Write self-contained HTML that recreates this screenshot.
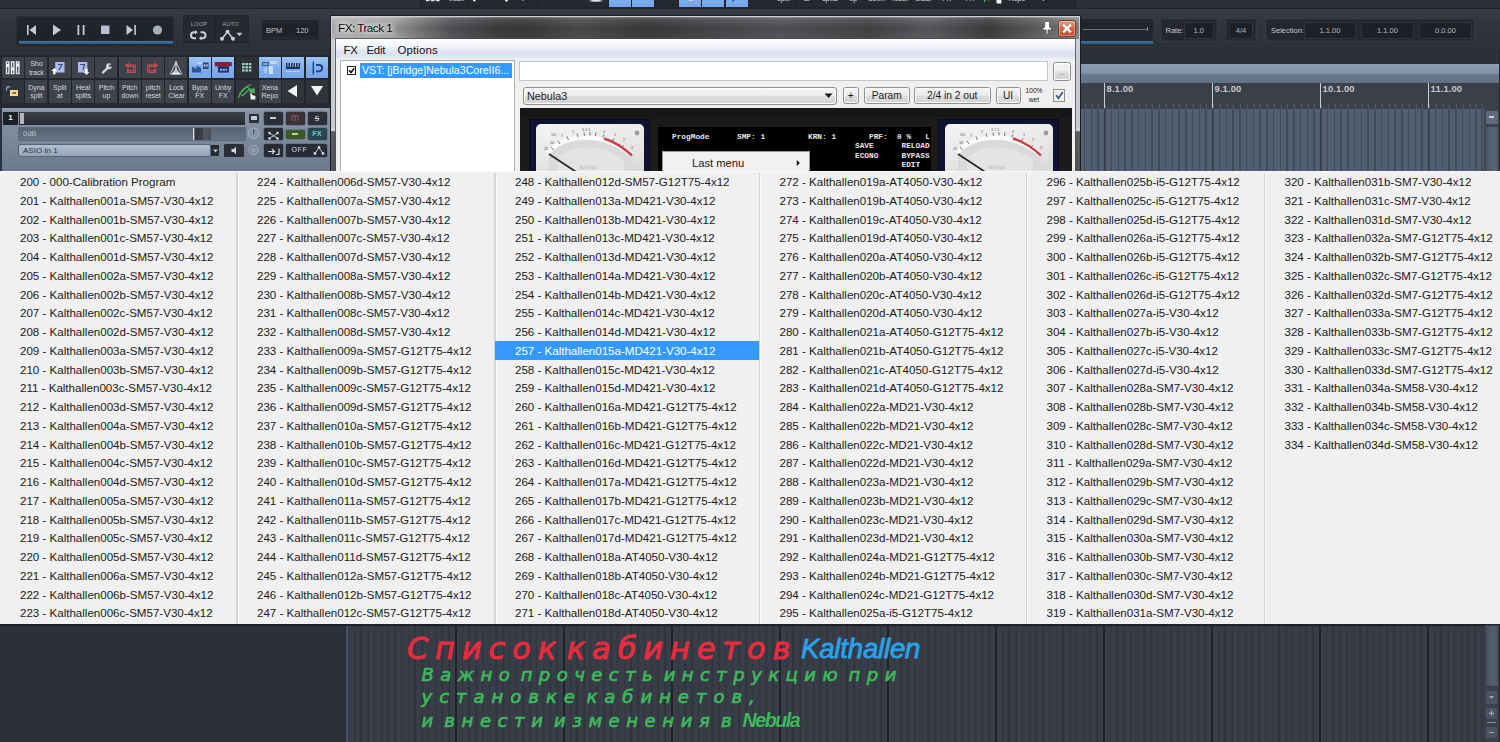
<!DOCTYPE html>
<html><head><meta charset="utf-8"><title>FX: Track 1</title>
<style>
html,body{margin:0;padding:0;}
body{width:1500px;height:742px;overflow:hidden;background:#2d3139;position:relative;font-family:"Liberation Sans","DejaVu Sans",sans-serif;}
.a{position:absolute;}
.menu{left:0;top:171px;width:1500px;height:453px;background:#f0f0f0;border-top:1px solid #fafafa;box-sizing:border-box;}
.col{position:absolute;top:1px;}
.col div{height:18.75px;line-height:18.75px;font-size:11.6px;color:#1a1a1a;padding-left:20px;white-space:nowrap;letter-spacing:-0.02px;}
.col div.sel{background:#3399ff;color:#fff;position:relative;top:-.5px;height:18.500px;line-height:19.750px;margin-bottom:.250px;}
.dv{position:absolute;top:1px;height:451px;width:1.700px;margin-left:-1px;background:#d5d5d5;border-right:1px solid #fbfbfb;}
</style></head><body>
<style>.tb{position:absolute;width:22px;height:21px;background:#3e424a;box-shadow:0 0 0 1px #22252b;color:#d4d7de;font-size:7.100px;line-height:8.500px;text-align:center;overflow:hidden;}.tb.r2{height:22.5px}.tb.bl{background:linear-gradient(#9dc4f5,#7eaeec 55%,#76a6e6);}.tb.r2 span{padding-top:3.900px}.tb span{display:block;padding-top:3.300px;letter-spacing:-0.1px}.tb svg{position:absolute;left:0;top:0}</style><div class="a" style="left:0;top:0;width:1500px;height:8px;background:#2b2f38"></div><div class="a" style="left:0;top:8px;width:1500px;height:1px;background:#20232a"></div><div class="a" style="left:0;top:9px;width:1500px;height:46px;background:linear-gradient(#373b44,#30343c 40%,#2b2f37)"></div><div class="a" style="left:17px;top:17px;width:156px;height:29px;background:linear-gradient(#23262d,#1f2228 70%,#2a2826);border-radius:2px;box-shadow:0 0 0 1px #2a2d35"></div><div class="a" style="left:19px;top:41px;width:154px;height:3px;background:linear-gradient(#4379a8,#2c5680)"></div><div class="a" style="left:44px;top:18px;width:1px;height:23px;background:#1d2026"></div><div class="a" style="left:68px;top:18px;width:1px;height:23px;background:#1d2026"></div><div class="a" style="left:92px;top:18px;width:1px;height:23px;background:#1d2026"></div><div class="a" style="left:117px;top:18px;width:1px;height:23px;background:#1d2026"></div><div class="a" style="left:143px;top:18px;width:1px;height:23px;background:#1d2026"></div><svg class="a" style="left:17px;top:17px" width="156" height="29" viewBox="17 17 156 29"><g fill="#c6cad3"><rect x="27" y="25" width="1.6" height="10"/><path d="M36 25v10l-6.5-5z"/><path d="M53 24.5v11l8-5.5z"/><rect x="77.5" y="25" width="1.8" height="10"/><rect x="82.7" y="25" width="1.8" height="10"/><rect x="101" y="25.5" width="8.5" height="8.5" fill="#b9bdd2"/><path d="M126.5 25v10l6.5-5z"/><rect x="134.3" y="25" width="1.6" height="10"/><circle cx="157.5" cy="30" r="4.6" fill="#a3b4b2"/></g></svg><div class="a" style="left:183.500px;top:15.500px;width:30px;height:26px;background:#252930;box-shadow:0 0 0 1px #22252b"></div><div class="a" style="left:215.500px;top:15.500px;width:32px;height:26px;background:#252930;box-shadow:0 0 0 1px #22252b"></div><div class="a" style="left:184px;top:20.800px;width:30px;text-align:center;font-size:5.600px;color:#a3a7b1;letter-spacing:.3px">LOOP</div><div class="a" style="left:215.500px;top:20.800px;width:30px;text-align:center;font-size:5.600px;color:#a3a7b1;letter-spacing:.3px">AUTO</div><svg class="a" style="left:183px;top:16px" width="64" height="28" viewBox="183 15.300 64 28" fill="none" stroke="#c9cdd5" stroke-width="2"><path d="M196.5 31.5h-2.5a3 3 0 0 0 0 6h2"/><path d="M200 37.5h2.5a3 3 0 0 0 0-6h-2"/><path d="M195 29.3l2.6 2.2-2.6 2.2z" fill="#c3c7d0" stroke="none"/><path d="M201.5 35.3l-2.6 2.2 2.6 2.2z" fill="#c3c7d0" stroke="none"/><path d="M222 38l5.5-7 5.5 7" stroke-width="1.4"/><circle cx="227.5" cy="31" r="2" fill="#c9cdd5" stroke="none"/><circle cx="222" cy="38" r="2" fill="#c9cdd5" stroke="none"/><circle cx="233" cy="38" r="2" fill="#c9cdd5" stroke="none"/><path d="M236.5 32h6l-3 3.6z" fill="#c3c7d0" stroke="none"/></svg><div class="a" style="left:263px;top:21px;width:55px;height:18px;background:linear-gradient(#2a2d35 0,#1f2228 18%,#1f2228 82%,#2a2d35 100%);box-shadow:0 0 0 1px #23262c;font-size:7.500px;line-height:20px;color:#c0c4cc"><span class="a" style="left:3px">BPM</span><span class="a" style="left:33px">120</span></div><div class="a" style="left:0;top:55px;width:331px;height:50px;background:#23262c"></div><div class="tb" style="left:2.0px;top:57px"><svg width="22" height="21" viewBox="0 0 22 21"><g fill="#e3e6eb"><rect x="3.800" y="4.200" width="3.800" height="13"/><rect x="8.800" y="4.200" width="3.800" height="13"/><rect x="13.800" y="4.200" width="3.800" height="13"/></g><g fill="#33363d"><rect x="5.200" y="5.500" width="1" height="10.500"/><rect x="10.200" y="5.500" width="1" height="10.500"/><rect x="15.200" y="5.500" width="1" height="10.500"/></g><g fill="#f4f5f8"><rect x="4.300" y="7" width="2.800" height="3"/><rect x="9.300" y="10.500" width="2.800" height="3"/><rect x="14.300" y="6.500" width="2.800" height="3"/></g></svg></div><div class="tb" style="left:25.35px;top:57px"><span>Sho<br>track</span></div><div class="tb" style="left:48.7px;top:57px"><svg width="22" height="21" viewBox="0 0 22 21"><rect x="6.200" y="5" width="9.300" height="10.500" fill="#a9bbec"/><path d="M9 7.500h4l-3 5.500" stroke="#3e4a7a" fill="none" stroke-width="1.200"/><path d="M5.300 11l2.800 3h-1.600v3.300h-2.400v-3.300h-1.600z" fill="#fff"/></svg></div><div class="tb" style="left:72.05px;top:57px"><svg width="22" height="21" viewBox="0 0 22 21"><rect x="6" y="5" width="9.300" height="10.500" fill="#a9bbec"/><path d="M8 7.500h4.500l-1.500 5.500" stroke="#3e4a7a" fill="none" stroke-width="1.200"/><path d="M14.500 18l2.800-3h-1.600v-3.300h-2.400v3.300h-1.600z" fill="#fff"/></svg></div><div class="tb" style="left:95.4px;top:57px"><svg width="22" height="21" viewBox="0 0 22 21"><path d="M8 15.500l5-5" stroke="#d4d7de" stroke-width="2.400" stroke-linecap="round"/><path d="M16.300 7.200a3 3 0 1 0 .7 2.300l-2.300.5-1.200-1.400z" fill="#d4d7de"/></svg></div><div class="tb" style="left:118.75px;top:57px"><svg width="22" height="21" viewBox="0 0 22 21"><path d="M9.500 8.600h6v6h-6.500v-2.500" fill="none" stroke="#d9606a" stroke-width="2.200"/><path d="M9.500 8.600h6v6h-6.500v-2.500" fill="none" stroke="#a52a3a" stroke-width=".9"/><path d="M5.800 8.600l4-3v6z" fill="#d04a56"/></svg></div><div class="tb" style="left:142.1px;top:57px"><svg width="22" height="21" viewBox="0 0 22 21"><path d="M12.500 8.600h-6v6h6.500v-2.500" fill="none" stroke="#d9606a" stroke-width="2.200"/><path d="M12.500 8.600h-6v6h6.500v-2.500" fill="none" stroke="#a52a3a" stroke-width=".9"/><path d="M16.200 8.600l-4-3v6z" fill="#d04a56"/></svg></div><div class="tb" style="left:165.45px;top:57px"><svg width="22" height="21" viewBox="0 0 22 21"><path d="M11 5l5.500 12h-11z" fill="none" stroke="#aab0bd" stroke-width="1.200"/><path d="M6.500 17.500l4.500-6 4.500 6z" fill="#e3e7ee"/><path d="M11 4.500v8" stroke="#f4f6fa" stroke-width="1"/><circle cx="11" cy="14.800" r=".8" fill="#4a5680"/></svg></div><div class="tb bl" style="left:188.8px;top:57px"><svg width="22" height="21" viewBox="0 0 22 21"><path d="M3 9.500l4.500 2.500v-3.500l4.500 2.500v4.500h-9z" fill="#2a5690"/><rect x="14" y="5.500" width="5.500" height="6.500" fill="#233f74"/><path d="M15.300 10.300v-3l1.400 1.800 1.400-1.800v3" stroke="#dbe7fa" stroke-width=".8" fill="none"/><path d="M8.500 6h4.500" stroke="#dce9fb" stroke-width="1.300"/></svg></div><div class="tb bl" style="left:212.15px;top:57px"><svg width="22" height="21" viewBox="0 0 22 21"><path d="M2.800 5h17v4.200h-2.800v1.500h-11.400v-1.500h-2.800z" fill="#7d1f3f"/><rect x="6" y="10" width="11" height="5.600" fill="#1f3770"/><path d="M8 12.800h7" stroke="#e8eefc" stroke-width="1.300" stroke-dasharray="2 .8"/></svg></div><div class="tb" style="background:#2c3037;left:235.5px;top:57px"><svg width="22" height="21" viewBox="0 0 22 21"><g fill="#9ed3c0"><rect x="6" y="6" width="2.600" height="2.200"/><rect x="9.400" y="6" width="2.600" height="2.200"/><rect x="12.800" y="6" width="2.600" height="2.200"/><rect x="6" y="9.200" width="2.600" height="2.200"/><rect x="9.400" y="9.200" width="2.600" height="2.200"/><rect x="12.800" y="9.200" width="2.600" height="2.200"/><rect x="6" y="12.400" width="2.600" height="2.200"/><rect x="9.400" y="12.400" width="2.600" height="2.200"/><rect x="12.800" y="12.400" width="2.600" height="2.200"/></g></svg></div><div class="tb bl" style="left:258.85px;top:57px"><svg width="22" height="21" viewBox="0 0 22 21"><rect x="3" y="5" width="7" height="4" fill="#2c5c9a"/><path d="M4 7h5" stroke="#e8f0fc" stroke-width="1"/><rect x="11" y="4" width="7" height="3" fill="#bcd6f8"/><rect x="5" y="11" width="3" height="5" fill="#a9c9f5"/><rect x="10" y="9" width="4" height="8" fill="#c8ddfa"/></svg></div><div class="tb bl" style="left:282.2px;top:57px"><svg width="22" height="21" viewBox="0 0 22 21"><rect x="4" y="6" width="14" height="6" fill="#1c2f58"/><g fill="#9fc1f0"><rect x="5.500" y="6" width="1" height="4"/><rect x="8" y="6" width="1" height="4"/><rect x="10.500" y="6" width="1" height="4"/><rect x="13" y="6" width="1" height="4"/><rect x="15.500" y="6" width="1" height="4"/></g><path d="M4 14.500h14" stroke="#e8f0fc" stroke-width="1.200" stroke-dasharray="1.200 1"/></svg></div><div class="tb bl" style="left:305.55px;top:57px"><svg width="22" height="21" viewBox="0 0 22 21"><path d="M7.300 4.500v13" stroke="#24488a" stroke-width="1.500"/><path d="M10 8h3a3.200 3.200 0 0 1 0 6.400h-3" fill="none" stroke="#1f3f80" stroke-width="1.800"/></svg></div><div class="tb r2" style="left:2.0px;top:80px;background:#30333a"><svg width="22" height="22" viewBox="0 0 22 22"><path d="M4.500 10.500v-2a2 2 0 0 1 3.500-1.200" fill="none" stroke="#a9acb4" stroke-width="1.200"/><rect x="8" y="10" width="8" height="6" fill="#f0d7a0"/><rect x="10.500" y="12" width="3.500" height="2" fill="#8a6a2a"/></svg></div><div class="tb r2" style="left:25.35px;top:80px"><span>Dyna<br>split</span></div><div class="tb r2" style="left:48.7px;top:80px"><span>Split<br>at</span></div><div class="tb r2" style="left:72.05px;top:80px"><span>Heal<br>splits</span></div><div class="tb r2" style="left:95.4px;top:80px"><span>Pitch<br>up</span></div><div class="tb r2" style="left:118.75px;top:80px"><span>Pitch<br>down</span></div><div class="tb r2" style="left:142.1px;top:80px"><span>pitch<br>reset</span></div><div class="tb r2" style="left:165.45px;top:80px"><span>Lock<br>Clear</span></div><div class="tb r2" style="left:188.8px;top:80px"><span>Bypa<br>FX</span></div><div class="tb r2" style="left:212.15px;top:80px"><span>Unby<br>FX</span></div><div class="tb r2" style="left:235.5px;top:80px;background:#30333a"><svg width="22" height="22" viewBox="0 0 22 22"><path d="M2.500 18c1-6 5-11 13-13.500" fill="none" stroke="#4fae62" stroke-width="1.300"/><path d="M4 13.500l7-7 2.500 2.500-7 7z" fill="none" stroke="#4fae62" stroke-width="1.200"/><path d="M6.500 16l7-7" stroke="#4fae62" stroke-width="1"/><rect x="13.500" y="8.500" width="5.500" height="4.500" fill="#4aa860"/><path d="M14.200 15c0-2.200 2-2.200 2 0l3.200 1v3.500h-4.700z" fill="#f2f4f7"/></svg></div><div class="tb r2" style="left:258.85px;top:80px"><span>Xena<br>Repo</span></div><div class="tb r2" style="left:282.2px;top:80px;background:#30333a"><svg width="22" height="22" viewBox="0 0 22 22"><path d="M15 5v12l-9.500-6z" fill="#f2f3f6"/></svg></div><div class="tb r2" style="left:305.55px;top:80px;background:#30333a"><svg width="22" height="22" viewBox="0 0 22 22"><path d="M5 6h12l-6 9.500z" fill="#f2f3f6"/></svg></div>
<div class="a" style="left:420px;top:0;width:656px;height:7.500px;background:#202329"></div><div class="tb" style="left:422.0px;top:-16.500px;height:23px;background:#262930"><svg width="22" height="22" viewBox="0 0 22 22"><g fill="#e3e6eb"><rect x="3.800" y="4.200" width="3.800" height="13"/><rect x="8.800" y="4.200" width="3.800" height="13"/><rect x="13.800" y="4.200" width="3.800" height="13"/></g><g fill="#33363d"><rect x="5.200" y="5.500" width="1" height="10.500"/><rect x="10.200" y="5.500" width="1" height="10.500"/><rect x="15.200" y="5.500" width="1" height="10.500"/></g><g fill="#f4f5f8"><rect x="4.300" y="7" width="2.800" height="3"/><rect x="9.300" y="10.500" width="2.800" height="3"/><rect x="14.300" y="6.500" width="2.800" height="3"/></g></svg></div><div class="tb" style="left:445.35px;top:-16.500px;height:23px;background:#262930"><span>Sho<br>track</span></div><div class="tb" style="left:468.7px;top:-16.500px;height:23px;background:#262930"><svg width="22" height="22" viewBox="0 0 22 22"><rect x="6.200" y="5" width="9.300" height="10.500" fill="#a9bbec"/><path d="M9 7.500h4l-3 5.500" stroke="#3e4a7a" fill="none" stroke-width="1.200"/><path d="M5.300 11l2.800 3h-1.600v3.300h-2.400v-3.300h-1.600z" fill="#fff"/></svg></div><div class="tb" style="left:492.05px;top:-16.500px;height:23px;background:#262930"><svg width="22" height="22" viewBox="0 0 22 22"><rect x="6" y="5" width="9.300" height="10.500" fill="#a9bbec"/><path d="M8 7.500h4.500l-1.500 5.500" stroke="#3e4a7a" fill="none" stroke-width="1.200"/><path d="M14.500 18l2.800-3h-1.600v-3.300h-2.400v3.300h-1.600z" fill="#fff"/></svg></div><div class="tb" style="left:515.4px;top:-16.500px;height:23px;background:#262930"><svg width="22" height="22" viewBox="0 0 22 22"><path d="M8 15.500l5-5" stroke="#d4d7de" stroke-width="2.400" stroke-linecap="round"/><path d="M16.300 7.200a3 3 0 1 0 .7 2.300l-2.300.5-1.200-1.400z" fill="#d4d7de"/></svg></div><div class="tb" style="left:538.75px;top:-16.500px;height:23px;background:#262930"><svg width="22" height="22" viewBox="0 0 22 22"><path d="M9.500 8.600h6v6h-6.500v-2.500" fill="none" stroke="#d9606a" stroke-width="2.200"/><path d="M9.500 8.600h6v6h-6.500v-2.500" fill="none" stroke="#a52a3a" stroke-width=".9"/><path d="M5.800 8.600l4-3v6z" fill="#d04a56"/></svg></div><div class="tb" style="left:562.1px;top:-16.500px;height:23px;background:#262930"><svg width="22" height="22" viewBox="0 0 22 22"><path d="M12.500 8.600h-6v6h6.500v-2.500" fill="none" stroke="#d9606a" stroke-width="2.200"/><path d="M12.500 8.600h-6v6h6.500v-2.500" fill="none" stroke="#a52a3a" stroke-width=".9"/><path d="M16.200 8.600l-4-3v6z" fill="#d04a56"/></svg></div><div class="tb" style="left:585.45px;top:-16.500px;height:23px;background:#262930"><svg width="22" height="22" viewBox="0 0 22 22"><path d="M11 5l5.500 12h-11z" fill="none" stroke="#aab0bd" stroke-width="1.200"/><path d="M6.500 17.500l4.500-6 4.500 6z" fill="#e3e7ee"/><path d="M11 4.500v8" stroke="#f4f6fa" stroke-width="1"/><circle cx="11" cy="14.800" r=".8" fill="#4a5680"/></svg></div><div class="tb bl" style="left:608.8px;top:-16.500px;height:23px"><svg width="22" height="22" viewBox="0 0 22 22"><path d="M3 9.500l4.500 2.500v-3.500l4.500 2.500v4.500h-9z" fill="#2a5690"/><rect x="14" y="5.500" width="5.500" height="6.500" fill="#233f74"/><path d="M15.300 10.300v-3l1.400 1.800 1.400-1.800v3" stroke="#dbe7fa" stroke-width=".8" fill="none"/><path d="M8.500 6h4.500" stroke="#dce9fb" stroke-width="1.300"/></svg></div><div class="tb bl" style="left:632.15px;top:-16.500px;height:23px"><svg width="22" height="22" viewBox="0 0 22 22"><path d="M2.800 5h17v4.200h-2.800v1.500h-11.400v-1.500h-2.800z" fill="#7d1f3f"/><rect x="6" y="10" width="11" height="5.600" fill="#1f3770"/><path d="M8 12.800h7" stroke="#e8eefc" stroke-width="1.300" stroke-dasharray="2 .8"/></svg></div><div class="tb" style="left:655.5px;top:-16.500px;height:23px;background:#262930"><svg width="22" height="22" viewBox="0 0 22 22"><g fill="#9ed3c0"><rect x="6" y="6" width="2.600" height="2.200"/><rect x="9.400" y="6" width="2.600" height="2.200"/><rect x="12.800" y="6" width="2.600" height="2.200"/><rect x="6" y="9.200" width="2.600" height="2.200"/><rect x="9.400" y="9.200" width="2.600" height="2.200"/><rect x="12.800" y="9.200" width="2.600" height="2.200"/><rect x="6" y="12.400" width="2.600" height="2.200"/><rect x="9.400" y="12.400" width="2.600" height="2.200"/><rect x="12.800" y="12.400" width="2.600" height="2.200"/></g></svg></div><div class="tb bl" style="left:678.85px;top:-16.500px;height:23px"><svg width="22" height="22" viewBox="0 0 22 22"><rect x="3" y="5" width="7" height="4" fill="#2c5c9a"/><path d="M4 7h5" stroke="#e8f0fc" stroke-width="1"/><rect x="11" y="4" width="7" height="3" fill="#bcd6f8"/><rect x="5" y="11" width="3" height="5" fill="#a9c9f5"/><rect x="10" y="9" width="4" height="8" fill="#c8ddfa"/></svg></div><div class="tb bl" style="left:702.2px;top:-16.500px;height:23px"><svg width="22" height="22" viewBox="0 0 22 22"><rect x="4" y="6" width="14" height="6" fill="#1c2f58"/><g fill="#9fc1f0"><rect x="5.500" y="6" width="1" height="4"/><rect x="8" y="6" width="1" height="4"/><rect x="10.500" y="6" width="1" height="4"/><rect x="13" y="6" width="1" height="4"/><rect x="15.500" y="6" width="1" height="4"/></g><path d="M4 14.500h14" stroke="#e8f0fc" stroke-width="1.200" stroke-dasharray="1.200 1"/></svg></div><div class="tb bl" style="left:725.55px;top:-16.500px;height:23px"><svg width="22" height="22" viewBox="0 0 22 22"><path d="M7.300 4.500v13" stroke="#24488a" stroke-width="1.500"/><path d="M10 8h3a3.200 3.200 0 0 1 0 6.400h-3" fill="none" stroke="#1f3f80" stroke-width="1.800"/></svg></div><div class="tb" style="left:748.9px;top:-16.500px;height:23px;background:#262930"><svg width="22" height="22" viewBox="0 0 22 22"><path d="M4.500 10.500v-2a2 2 0 0 1 3.500-1.200" fill="none" stroke="#a9acb4" stroke-width="1.200"/><rect x="8" y="10" width="8" height="6" fill="#f0d7a0"/><rect x="10.500" y="12" width="3.500" height="2" fill="#8a6a2a"/></svg></div><div class="tb" style="left:772.25px;top:-16.500px;height:23px;background:#262930"><span>Dyna<br>split</span></div><div class="tb" style="left:795.6px;top:-16.500px;height:23px;background:#262930"><span>Split<br>at</span></div><div class="tb" style="left:818.95px;top:-16.500px;height:23px;background:#262930"><span>Heal<br>splits</span></div><div class="tb" style="left:842.3px;top:-16.500px;height:23px;background:#262930"><span>Pitch<br>up</span></div><div class="tb" style="left:865.65px;top:-16.500px;height:23px;background:#262930"><span>Pitch<br>down</span></div><div class="tb" style="left:889.0px;top:-16.500px;height:23px;background:#262930"><span>pitch<br>reset</span></div><div class="tb" style="left:912.35px;top:-16.500px;height:23px;background:#262930"><span>Lock<br>Clear</span></div><div class="tb" style="left:935.7px;top:-16.500px;height:23px;background:#262930"><span>Bypa<br>FX</span></div><div class="tb" style="left:959.05px;top:-16.500px;height:23px;background:#262930"><span>Unby<br>FX</span></div><div class="tb" style="left:982.4px;top:-16.500px;height:23px;background:#262930"><svg width="22" height="22" viewBox="0 0 22 22"><path d="M2.500 18c1-6 5-11 13-13.500" fill="none" stroke="#4fae62" stroke-width="1.300"/><path d="M4 13.500l7-7 2.500 2.500-7 7z" fill="none" stroke="#4fae62" stroke-width="1.200"/><path d="M6.500 16l7-7" stroke="#4fae62" stroke-width="1"/><rect x="13.500" y="8.500" width="5.500" height="4.500" fill="#4aa860"/><path d="M14.200 15c0-2.200 2-2.200 2 0l3.200 1v3.500h-4.700z" fill="#f2f4f7"/></svg></div><div class="tb" style="left:1005.75px;top:-16.500px;height:23px;background:#262930"><span>Xena<br>Repo</span></div><div class="tb" style="left:1029.1px;top:-16.500px;height:23px;background:#262930"><svg width="22" height="22" viewBox="0 0 22 22"><path d="M15 5v12l-9.500-6z" fill="#f2f3f6"/></svg></div><div class="tb" style="left:1052.45px;top:-16.500px;height:23px;background:#262930"><svg width="22" height="22" viewBox="0 0 22 22"><path d="M5 6h12l-6 9.500z" fill="#f2f3f6"/></svg></div>
<div class="a" style="left:0;top:103px;width:331px;height:5px;background:#262a31"></div><div class="a" style="left:0;top:107.500px;width:330.500px;height:64px;background:linear-gradient(#91a0b2 0,#8593a5 5%,#7a8899 50%,#6b798a 100%)"></div><div class="a" style="left:0;top:107.500px;width:2px;height:64px;background:#2a3040"></div><div class="a" style="left:3px;top:112px;width:15px;height:12.500px;background:#1d2027;color:#f4f4f4;font-size:8px;line-height:12.500px;text-align:center;font-weight:bold">1</div><div class="a" style="left:19px;top:112px;width:225.500px;height:12.500px;background:linear-gradient(#3a3f49,#262a32)"></div><div class="a" style="left:20px;top:112.500px;width:4px;height:11.500px;background:#aeb6c2"></div><div class="a" style="left:19px;top:128px;width:225.500px;height:11.500px;background:linear-gradient(#566373,#667383);box-shadow:0 0 0 1px #5d6a7b;font-size:7.500px;line-height:12px;color:#b4bfcc"><span style="padding-left:4px">0dB</span></div><div class="a" style="left:193px;top:127.500px;width:17.500px;height:12.500px;background:linear-gradient(90deg,#d8dde6 0,#d8dde6 6%,#30343c 10%,#3d424b 55%,#555b66 60%,#484d57 100%)"></div><div class="a" style="left:19px;top:144.500px;width:191px;height:11px;background:linear-gradient(#b1bfcf,#94a4b8);border-radius:2px;box-shadow:0 0 0 1px #566578;font-size:8px;line-height:11.500px;color:#2a3442"><span style="padding-left:4px">ASIO In 1</span></div><div class="a" style="left:210.500px;top:144.500px;width:8.500px;height:11px;background:#262a31"></div><svg class="a" style="left:210.500px;top:144.500px" width="9" height="11"><path d="M2 4.500h5l-2.500 3z" fill="#c9ced8"/></svg><div class="a" style="left:224px;top:144px;width:19.500px;height:12.500px;background:#2a2e35;border-radius:1.500px"></div><svg class="a" style="left:224px;top:144px" width="20" height="13"><path d="M7.500 5h2l2.500-2.200v7.400l-2.500-2.200h-2z" fill="#cfd3db"/></svg><div class="a" style="left:248.500px;top:114px;width:10px;height:8.500px;background:#2b3038;border-radius:1px"></div><div class="a" style="left:251px;top:116px;width:5.500px;height:4px;background:#c5cbd6"></div><svg class="a" style="left:246px;top:126px" width="16" height="32" fill="none"><circle cx="7.600" cy="7.300" r="5.300" fill="#8494a9" stroke="#a6b4c6" stroke-width="1"/><path d="M7.600 3.500v4.500" stroke="#46546a" stroke-width="1.200"/><circle cx="7.600" cy="24" r="4.600" fill="#7c8ca1" stroke="#9fadc0" stroke-width="1"/><circle cx="7.600" cy="24" r="1.500" stroke="#a9b7c9" stroke-width=".8"/></svg><div class="a" style="left:263.5px;top:112px;width:19px;height:12.500px;background:#2a2e36;border-radius:1.500px;box-shadow:0 0 0 .5px #566276"><div class="a" style="left:6.500px;top:4.500px;width:6px;height:2.500px;background:#c9ced8"></div></div><div class="a" style="left:285.5px;top:112px;width:19px;height:12.500px;background:#3b3137;border-radius:1.500px;box-shadow:0 0 0 .5px #566276"><div class="a" style="left:0;top:0;width:19px;text-align:center;font-size:10px;line-height:11px;color:#8e5f66">m</div></div><div class="a" style="left:307.5px;top:112px;width:19px;height:12.500px;background:#2a2e36;border-radius:1.500px;box-shadow:0 0 0 .5px #566276"><div class="a" style="left:0;top:0;width:19px;text-align:center;font-size:9px;line-height:12.500px;color:#d5d9e1;text-decoration:line-through">s</div></div><div class="a" style="left:263.5px;top:127.5px;width:19px;height:12.500px;background:#272b33;border-radius:1.500px;box-shadow:0 0 0 .5px #566276"><svg width="19" height="13" fill="#d5d9e1"><circle cx="5.500" cy="4" r="1.300"/><circle cx="13.500" cy="4" r="1.300"/><circle cx="5.500" cy="9.500" r="1.300"/><circle cx="13.500" cy="9.500" r="1.300"/><path d="M6 4.500l7 4.500M13 4.500l-7 4.500" stroke="#d5d9e1" stroke-width=".9"/></svg></div><div class="a" style="left:285.500px;top:129.500px;width:19px;height:9px;background:#3c5a25;border-radius:1.500px;box-shadow:0 0 0 .5px #566276"><div class="a" style="left:6.500px;top:3.500px;width:6px;height:2px;background:#b6dc86"></div></div><div class="a" style="left:307.5px;top:127.5px;width:19px;height:12.500px;background:#274752;border-radius:1.500px;box-shadow:0 0 0 .5px #566276"><div class="a" style="left:0;top:0;width:19px;text-align:center;font-size:7.500px;line-height:12.500px;color:#72c4c9;font-weight:bold">FX</div></div><div class="a" style="left:263.5px;top:144px;width:19px;height:12.500px;background:#272b33;border-radius:1.500px;box-shadow:0 0 0 .5px #566276"><svg width="19" height="13" fill="none" stroke="#d5d9e1" stroke-width="1.200"><path d="M4 6.500h6M8 4l2.500 2.500-2.500 2.500"/><path d="M12 9.500h3v-6"/></svg></div><div class="a" style="left:285.5px;top:144px;width:41px;height:12.500px;background:#272b33;border-radius:1.500px;box-shadow:0 0 0 .5px #566276"><div class="a" style="left:6px;top:0;font-size:7px;line-height:12.500px;color:#d5d9e1;letter-spacing:.6px">OFF</div><svg class="a" style="left:26px;top:0" width="14" height="13" fill="#d5d9e1"><circle cx="7" cy="3.500" r="1.400"/><circle cx="3" cy="9.500" r="1.400"/><circle cx="11" cy="9.500" r="1.400"/><path d="M3 9.500l4-6 4 6" stroke="#d5d9e1" fill="none" stroke-width=".9"/></svg></div>
<style>.dbx{position:absolute;top:19.500px;height:20.500px;background:#24272e;box-shadow:0 0 0 1px #2a2d34,0 0 0 2px #353942;font-size:7.500px;line-height:22px;color:#c2c6cf;white-space:nowrap}.dbx i{position:absolute;top:3.500px;height:15px;background:#1d2026;box-shadow:0 0 0 1px #30333b;font-style:normal;line-height:16px;text-align:center;color:#b4b8c1}.rl{position:absolute;top:84.200px;font-size:9.400px;line-height:10px;color:#c6cad2;font-weight:bold;letter-spacing:.1px}</style><div class="a" style="left:1080px;top:19px;width:73px;height:22px;background:#23262d"></div><div class="a" style="left:1083px;top:29px;width:65px;height:1px;background:#70747c"></div><div class="a" style="left:1147px;top:27px;width:1px;height:4px;background:#8a8e96"></div><div class="a" style="left:1080px;top:40.500px;width:73px;height:3.500px;background:linear-gradient(#3f74a2,#2b5580)"></div><div class="dbx" style="left:1161.500px;width:54px"><span style="padding-left:4px">Rate:</span><i style="left:23px;width:28.500px">1.0</i></div><div class="dbx" style="left:1227px;width:28px"><i style="left:3px;width:22px">4/4</i></div><div class="dbx" style="left:1267px;width:206px"><span style="padding-left:4px">Selection:</span><i style="left:38px;width:50px">1.1.00</i><i style="left:95px;width:51px">1.1.00</i><i style="left:153px;width:51px">0.0.00</i></div><div class="a" style="left:1080px;top:51px;width:420px;height:13px;background:#2c3038"></div><div class="a" style="left:1080px;top:64px;width:420px;height:10px;background:linear-gradient(#8a9db3,#7d91a7)"></div><div class="a" style="left:1080px;top:74px;width:420px;height:9px;background:linear-gradient(#697a8e,#617286)"></div><div class="a" style="left:1080px;top:83px;width:420px;height:25.500px;background:#3a3f48"></div><div class="a" style="left:1080px;top:104px;width:404px;height:4.500px;background:repeating-linear-gradient(90deg,#6f7885 0,#6f7885 1px,transparent 1px,transparent 6.750px);background-position:-2.200px 0;opacity:.55"></div><div class="a" style="left:1080px;top:108.500px;width:404px;height:63px;background:#535e70"></div><div class="a" style="left:1080px;top:108.500px;width:404px;height:63px;background:repeating-linear-gradient(90deg,#434c5b 0,#434c5b 1.600px,transparent 1.600px,transparent 6.750px);background-position:-3px 0"></div><div class="a" style="left:1103.6px;top:83px;width:1.200px;height:25px;background:#c8ccd3"></div><div class="a" style="left:1103.6px;top:108.500px;width:1.500px;height:63px;background:#333a47"></div><div class="rl" style="left:1106.6px">8.1.00</div><div class="a" style="left:1211.6px;top:83px;width:1.200px;height:25px;background:#c8ccd3"></div><div class="a" style="left:1211.6px;top:108.500px;width:1.500px;height:63px;background:#333a47"></div><div class="rl" style="left:1214.6px">9.1.00</div><div class="a" style="left:1319.6px;top:83px;width:1.200px;height:25px;background:#c8ccd3"></div><div class="a" style="left:1319.6px;top:108.500px;width:1.500px;height:63px;background:#333a47"></div><div class="rl" style="left:1322.6px">10.1.00</div><div class="a" style="left:1427.6px;top:83px;width:1.200px;height:25px;background:#c8ccd3"></div><div class="a" style="left:1427.6px;top:108.500px;width:1.500px;height:63px;background:#333a47"></div><div class="rl" style="left:1430.6px">11.1.00</div><div class="a" style="left:1484px;top:108.500px;width:14.500px;height:63px;background:#3d4450"></div><div class="a" style="left:1485.500px;top:110.500px;width:12px;height:13.500px;background:#5f6b7c;border-radius:1.500px"></div><div class="a" style="left:1489px;top:116px;width:5px;height:2px;background:#cfd4dc"></div><div class="a" style="left:1485.500px;top:127px;width:12px;height:45px;background:linear-gradient(90deg,#4b5563,#596475 60%,#505a69);border-radius:1.500px 1.500px 0 0"></div><div class="a" style="left:1498.500px;top:51px;width:1.500px;height:121px;background:#23262c"></div>
<div class="a" style="left:0;top:624px;width:1500px;height:118px;background:#2c3038"></div><div class="a" style="left:346px;top:624px;width:1138.500px;height:118px;background:#383d47"></div><div class="a" style="left:346px;top:624px;width:1138.500px;height:118px;background:repeating-linear-gradient(90deg,#30343d 0,#30343d 1.400px,transparent 1.400px,transparent 6.750px);background-position:1.200px 0"></div><div class="a" style="left:346px;top:624px;width:2px;height:118px;background:#46536a"></div><div class="a" style="left:455.2px;top:624px;width:1.500px;height:118px;background:#202329"></div><div class="a" style="left:563.2px;top:624px;width:1.500px;height:118px;background:#202329"></div><div class="a" style="left:671.2px;top:624px;width:1.500px;height:118px;background:#202329"></div><div class="a" style="left:779.2px;top:624px;width:1.500px;height:118px;background:#202329"></div><div class="a" style="left:887.2px;top:624px;width:1.500px;height:118px;background:#202329"></div><div class="a" style="left:995.2px;top:624px;width:1.500px;height:118px;background:#202329"></div><div class="a" style="left:1103.2px;top:624px;width:1.500px;height:118px;background:#202329"></div><div class="a" style="left:1211.2px;top:624px;width:1.500px;height:118px;background:#202329"></div><div class="a" style="left:1319.2px;top:624px;width:1.500px;height:118px;background:#202329"></div><div class="a" style="left:1427.2px;top:624px;width:1.500px;height:118px;background:#202329"></div><div class="a" style="left:0;top:624px;width:1500px;height:1.500px;background:#1e2127"></div><div class="a" style="left:1484.500px;top:625px;width:14px;height:117px;background:#3a404b"></div><div class="a" style="left:1485.500px;top:625.500px;width:12px;height:60.500px;background:linear-gradient(90deg,#46505e,#55606f 60%,#4b5564);border-radius:0 0 1.500px 1.500px"></div><div class="a" style="left:1486px;top:691px;width:11px;height:12.500px;background:#4b5463;border-radius:1px"></div><svg class="a" style="left:1486px;top:691px" width="11" height="13"><path d="M3 5h5l-2.500 3z" fill="#9ea6b2"/></svg><div class="a" style="left:1486px;top:708px;width:11px;height:10.500px;background:#4b5463;border-radius:1px"></div><svg class="a" style="left:1486px;top:708px" width="11" height="11" stroke="#9ea6b2" stroke-width="1.200"><path d="M3 5.300h5M5.500 2.800v5"/></svg><div class="a" style="left:1487px;top:721.500px;width:9px;height:1.500px;background:#8d95a1"></div><div class="a" style="left:1486px;top:727px;width:11px;height:10.500px;background:#4b5463;border-radius:1px"></div><div class="a" style="left:1489px;top:731.500px;width:5px;height:1.300px;background:#9ea6b2"></div><div class="a" style="left:1498.500px;top:624px;width:1.500px;height:118px;background:#23262c"></div><div id="cap1" class="a" style="left:407px;top:631px;font-family:'DejaVu Sans','Liberation Sans',sans-serif;font-style:italic;font-size:30.400px;line-height:36px;color:#e92b3e;-webkit-text-stroke:.9px #e92b3e;white-space:pre;letter-spacing:6.9px;word-spacing:-12.6px">Список кабинетов</div><div id="cap2" class="a" style="left:801px;top:632.500px;font-family:'Liberation Sans',sans-serif;font-style:italic;font-size:27.600px;line-height:32px;color:#2aa2ea;-webkit-text-stroke:.8px #2aa2ea;letter-spacing:-.2px">Kalthallen</div><div id="cap3" class="a" style="left:421.500px;top:663.600px;font-family:'DejaVu Sans','Liberation Sans',sans-serif;font-style:italic;font-size:18px;line-height:22.800px;color:#3db85c;-webkit-text-stroke:.7px #3db85c;white-space:pre;letter-spacing:6.7px;word-spacing:-10.4px"><span style="letter-spacing:6.450px;word-spacing:-7.670px">Важно прочесть инструкцию при</span><br><span style="letter-spacing:7px;word-spacing:-8.220px">установке кабинетов,</span><br><span style="letter-spacing:6.600px;word-spacing:-7.820px">и внести изменения в </span><span id="neb" style="font-family:'Liberation Sans',sans-serif;font-weight:bold;font-size:19.500px;letter-spacing:-1.400px;word-spacing:0;-webkit-text-stroke:0">Nebula</span></div>
<style>.wbtn{position:absolute;top:86.500px;height:17px;box-sizing:border-box;border:1px solid #8e8f8f;border-radius:2.500px;background:linear-gradient(#f4f4f4 0,#ececec 48%,#dedede 52%,#d2d2d2 100%);font-size:10.200px;line-height:15.500px;text-align:center;color:#1c1c1c;box-shadow:inset 0 0 0 1px #fafafa}.lcd{position:absolute;font-family:"Liberation Mono","DejaVu Sans Mono",monospace;font-size:7.800px;line-height:8px;color:#e6e6e6;font-weight:bold;white-space:pre}</style><div class="a" style="left:331px;top:16px;width:749px;height:160px;background:linear-gradient(#cdd0d4 0,#c6c9cd 112px,#e0e2e5 114px,#5a5c60 116px,#505256 100%);box-shadow:0 0 0 1px #1c1e22"></div><div class="a" style="left:332px;top:17px;width:747px;height:21.500px;background:linear-gradient(90deg,#b4b4b4 0,#a6a6a6 8%,#7a7b7c 12%,#55575a 16%,#3f4143 22%,#3b3d3f 26%,#4d4f51 33%,#3c3e40 42%,#55575a 60%,#46484a 72%,#5c5e61 80%,#3f4143 88%,#6d6e70 96%,#8a8b8d 100%)"></div><div class="a" style="left:332px;top:17px;width:747px;height:21.500px;background:linear-gradient(rgba(255,255,255,.35) 0,rgba(255,255,255,.08) 8%,rgba(0,0,0,.12) 50%,rgba(0,0,0,0) 100%)"></div><div class="a" style="left:338px;top:18.700px;font-size:11.600px;letter-spacing:-.45px;line-height:17px;color:#0c0c0c;text-shadow:0 0 4px #fff,0 0 6px #fff,0 0 8px #eee">FX: Track 1</div><svg class="a" style="left:1041px;top:21px" width="12" height="14" fill="#fff"><path d="M4.200 1h3.800v5.200l2 1.300v1h-7.800v-1l2-1.300z"/><rect x="5.600" y="8" width="1" height="4.500"/></svg><div class="a" style="left:1058.500px;top:21px;width:16px;height:15px;background:linear-gradient(#e0a08a,#cc6647 50%,#c0502f);border-radius:2px;box-shadow:0 0 0 1px #7a3a2a,inset 0 0 0 1px rgba(255,255,255,.35)"></div><svg class="a" style="left:1058.500px;top:21px" width="16" height="15" stroke="#fff" stroke-width="2.400" stroke-linecap="square"><path d="M5 4.500l6 6M11 4.500l-6 6"/></svg><div class="a" style="left:336px;top:38.500px;width:739px;height:136px;background:#f0f0f0;box-shadow:0 0 0 .8px #4a4c50"></div><div class="a" style="left:336px;top:38.500px;width:739px;height:20.500px;background:linear-gradient(#fefefe 0,#f3f5fb 35%,#dfe5f3 60%,#dde3f1 85%,#eceff7 100%)"></div><div class="a" style="left:343.500px;top:41.700px;font-size:11.400px;line-height:17px;color:#111;white-space:nowrap;letter-spacing:-.25px"><span class="a" style="left:0">FX</span><span class="a" style="left:23px">Edit</span><span class="a" style="left:54px;letter-spacing:.15px">Options</span></div><div class="a" style="left:340.500px;top:61px;width:173px;height:114px;background:#fff;box-shadow:0 0 0 1px #aeb2ba"></div><div class="a" style="left:360px;top:63px;width:151.500px;height:15px;background:#3399ff;color:#fff;font-size:10.600px;line-height:15px;white-space:nowrap;overflow:hidden"><span style="padding-left:2px">VST: [jBridge]Nebula3CoreII6...</span></div><div class="a" style="left:346.500px;top:65.500px;width:9px;height:9px;box-sizing:border-box;border:1.300px solid #222;background:#fff"></div><svg class="a" style="left:346.500px;top:65.500px" width="9" height="9" fill="none" stroke="#111" stroke-width="1.500"><path d="M2 4.300l2 2.200 3.300-4.300"/></svg><div class="a" style="left:519.500px;top:61.500px;width:527px;height:18.500px;background:#fff;box-shadow:0 0 0 1px #c3c6cc"></div><div class="wbtn" style="left:1052.500px;top:62px;width:18.500px;height:18.500px;line-height:20px;font-size:8px;color:#666">...</div><div class="wbtn" style="left:523px;top:86.500px;width:314px;height:18px;text-align:left;font-size:10.800px;line-height:16px;border-radius:3px"><span style="padding-left:3px">Nebula3</span></div><svg class="a" style="left:823.500px;top:92px" width="10" height="8"><path d="M.5 1.500h8l-4 4.500z" fill="#1a1a1a"/></svg><div class="wbtn" style="left:842.500px;width:16.500px">+</div><div class="wbtn" style="left:864px;width:45.500px">Param</div><div class="wbtn" style="left:914px;width:76.500px">2/4 in 2 out</div><div class="wbtn" style="left:995.500px;width:25px">UI</div><div class="a" style="left:1022px;top:85.500px;width:24px;text-align:center;font-size:6.600px;line-height:9.500px;color:#222">100%<br>wet</div><div class="a" style="left:1052.500px;top:89px;width:12.500px;height:12.500px;box-sizing:border-box;border:1px solid #8e8f8f;background:linear-gradient(135deg,#e3e4e8,#fbfbfc);box-shadow:inset 0 0 0 1px #f6f6f6"></div><svg class="a" style="left:1052.500px;top:89px" width="13" height="13" fill="none" stroke="#3d4c92" stroke-width="1.700"><path d="M3.200 6.300l2.300 3 4.300-6.300"/></svg><div class="a" style="left:519.500px;top:108px;width:552px;height:67px;background:#1b1b1b"></div><div class="a" style="left:519.500px;top:108px;width:552px;height:10px;background:#171717"></div><div class="a" style="left:530px;top:119.500px;width:119px;height:56px;background:#0f1233;box-shadow:0 0 0 1px #090b1c"></div><div class="a" style="left:536px;top:124px;width:107.500px;height:52px;background:linear-gradient(170deg,#f4f4f4,#e6e6e6 55%,#d6d6d6);border-radius:5px 5px 0 0"></div><svg class="a" style="left:536px;top:124.500px" width="108" height="48" viewBox="0 0 108 48" fill="none"><path d="M13 29C30 11 66 7 96 31L96 48H13z" fill="#dadada"/><path d="M22 33C36 20 64 17 88 35L88 48H22z" fill="#e4e4e4"/><path d="M12 27.500C30 8.500 66 5.500 96 30" stroke="#fafafa" stroke-width="4.500"/><path d="M68 13.500C78 16.500 88 23 96 30.500" stroke="#c8414b" stroke-width="2.400"/><g stroke="#6a6a6a" stroke-width=".9"><path d="M15 22l2.500 3M22 16l2 3M31 11.500l1.500 3.500M41 8.500l1 3.500M48 7.500l.5 3.500M54 7v3.500M60 7.500l-.5 3.500M68 9.500l-1.500 3M78 13.500l-2 3M88 20l-2.500 2.500"/></g><path d="M13 29l28 18.500" stroke="#262626" stroke-width="1.700"/><circle cx="101" cy="8" r="2.400" fill="#9c9c9c"/><text x="43" y="43.500" font-size="5.500" fill="#b9b9b9" font-style="italic" font-family="Liberation Serif,serif">AcuSam</text><g font-size="3.800" fill="#5a5a5a" font-family="Liberation Sans,sans-serif"><text x="8" y="25">20</text><text x="14" y="18.500">10</text><text x="25" y="11.500">7</text><text x="36" y="8">5</text><text x="46" y="5.500">3 2 1</text><text x="67" y="7.500">0</text><text x="78" y="11" fill="#a44">1</text><text x="87" y="16" fill="#a44">2</text><text x="95" y="24" fill="#a44">3</text><text x="15" y="10.500">VU</text></g></svg><div class="a" style="left:939px;top:119.500px;width:119px;height:56px;background:#0f1233;box-shadow:0 0 0 1px #090b1c"></div><div class="a" style="left:945px;top:124px;width:107.500px;height:52px;background:linear-gradient(170deg,#f4f4f4,#e6e6e6 55%,#d6d6d6);border-radius:5px 5px 0 0"></div><svg class="a" style="left:945px;top:124.500px" width="108" height="48" viewBox="0 0 108 48" fill="none"><path d="M13 29C30 11 66 7 96 31L96 48H13z" fill="#dadada"/><path d="M22 33C36 20 64 17 88 35L88 48H22z" fill="#e4e4e4"/><path d="M12 27.500C30 8.500 66 5.500 96 30" stroke="#fafafa" stroke-width="4.500"/><path d="M68 13.500C78 16.500 88 23 96 30.500" stroke="#c8414b" stroke-width="2.400"/><g stroke="#6a6a6a" stroke-width=".9"><path d="M15 22l2.500 3M22 16l2 3M31 11.500l1.500 3.500M41 8.500l1 3.500M48 7.500l.5 3.500M54 7v3.500M60 7.500l-.5 3.500M68 9.500l-1.500 3M78 13.500l-2 3M88 20l-2.500 2.500"/></g><path d="M13 29l28 18.500" stroke="#262626" stroke-width="1.700"/><circle cx="101" cy="8" r="2.400" fill="#9c9c9c"/><text x="43" y="43.500" font-size="5.500" fill="#b9b9b9" font-style="italic" font-family="Liberation Serif,serif">AcuSam</text><g font-size="3.800" fill="#5a5a5a" font-family="Liberation Sans,sans-serif"><text x="8" y="25">20</text><text x="14" y="18.500">10</text><text x="25" y="11.500">7</text><text x="36" y="8">5</text><text x="46" y="5.500">3 2 1</text><text x="67" y="7.500">0</text><text x="78" y="11" fill="#a44">1</text><text x="87" y="16" fill="#a44">2</text><text x="95" y="24" fill="#a44">3</text><text x="15" y="10.500">VU</text></g></svg><div class="a" style="left:658px;top:127px;width:273px;height:48px;background:#000"></div><div class="a" style="left:652px;top:119px;width:283px;height:8px;background:#1a1a1a"></div><div class="lcd" style="left:672px;top:133px">ProgMode</div><div class="lcd" style="left:737px;top:133px">SMP: 1</div><div class="lcd" style="left:808px;top:133px">KRN: 1</div><div class="lcd" style="left:869px;top:133px">PRF:  0 %   L</div><div class="lcd" style="left:855px;top:142.300px">SAVE</div><div class="lcd" style="left:901.500px;top:142.300px">RELOAD</div><div class="lcd" style="left:855px;top:151.700px">ECONO</div><div class="lcd" style="left:901.500px;top:151.700px">BYPASS</div><div class="lcd" style="left:901.500px;top:161px">EDIT</div><div class="a" style="left:663px;top:152px;width:146px;height:22px;background:#f1f1f1;box-shadow:0 0 0 1px #9a9a9a"></div><div class="a" style="left:692px;top:154.500px;font-size:11.200px;line-height:17px;color:#1a1a1a">Last menu</div><svg class="a" style="left:796px;top:158.500px" width="5" height="8"><path d="M.8 1l3 3-3 3z" fill="#111"/></svg>
<div class="a menu"><div class="dv" style="left:237px"></div><div class="dv" style="left:495px"></div><div class="dv" style="left:759.5px"></div><div class="dv" style="left:1026.5px"></div><div class="dv" style="left:1264.5px"></div><div class="col" style="left:0px;width:237px"><div>200 - 000-Calibration Program</div><div>201 - Kalthallen001a-SM57-V30-4x12</div><div>202 - Kalthallen001b-SM57-V30-4x12</div><div>203 - Kalthallen001c-SM57-V30-4x12</div><div>204 - Kalthallen001d-SM57-V30-4x12</div><div>205 - Kalthallen002a-SM57-V30-4x12</div><div>206 - Kalthallen002b-SM57-V30-4x12</div><div>207 - Kalthallen002c-SM57-V30-4x12</div><div>208 - Kalthallen002d-SM57-V30-4x12</div><div>209 - Kalthallen003a-SM57-V30-4x12</div><div>210 - Kalthallen003b-SM57-V30-4x12</div><div>211 - Kalthallen003c-SM57-V30-4x12</div><div>212 - Kalthallen003d-SM57-V30-4x12</div><div>213 - Kalthallen004a-SM57-V30-4x12</div><div>214 - Kalthallen004b-SM57-V30-4x12</div><div>215 - Kalthallen004c-SM57-V30-4x12</div><div>216 - Kalthallen004d-SM57-V30-4x12</div><div>217 - Kalthallen005a-SM57-V30-4x12</div><div>218 - Kalthallen005b-SM57-V30-4x12</div><div>219 - Kalthallen005c-SM57-V30-4x12</div><div>220 - Kalthallen005d-SM57-V30-4x12</div><div>221 - Kalthallen006a-SM57-V30-4x12</div><div>222 - Kalthallen006b-SM57-V30-4x12</div><div>223 - Kalthallen006c-SM57-V30-4x12</div></div><div class="col" style="left:237px;width:258px"><div>224 - Kalthallen006d-SM57-V30-4x12</div><div>225 - Kalthallen007a-SM57-V30-4x12</div><div>226 - Kalthallen007b-SM57-V30-4x12</div><div>227 - Kalthallen007c-SM57-V30-4x12</div><div>228 - Kalthallen007d-SM57-V30-4x12</div><div>229 - Kalthallen008a-SM57-V30-4x12</div><div>230 - Kalthallen008b-SM57-V30-4x12</div><div>231 - Kalthallen008c-SM57-V30-4x12</div><div>232 - Kalthallen008d-SM57-V30-4x12</div><div>233 - Kalthallen009a-SM57-G12T75-4x12</div><div>234 - Kalthallen009b-SM57-G12T75-4x12</div><div>235 - Kalthallen009c-SM57-G12T75-4x12</div><div>236 - Kalthallen009d-SM57-G12T75-4x12</div><div>237 - Kalthallen010a-SM57-G12T75-4x12</div><div>238 - Kalthallen010b-SM57-G12T75-4x12</div><div>239 - Kalthallen010c-SM57-G12T75-4x12</div><div>240 - Kalthallen010d-SM57-G12T75-4x12</div><div>241 - Kalthallen011a-SM57-G12T75-4x12</div><div>242 - Kalthallen011b-SM57-G12T75-4x12</div><div>243 - Kalthallen011c-SM57-G12T75-4x12</div><div>244 - Kalthallen011d-SM57-G12T75-4x12</div><div>245 - Kalthallen012a-SM57-G12T75-4x12</div><div>246 - Kalthallen012b-SM57-G12T75-4x12</div><div>247 - Kalthallen012c-SM57-G12T75-4x12</div></div><div class="col" style="left:495px;width:263.5px"><div>248 - Kalthallen012d-SM57-G12T75-4x12</div><div>249 - Kalthallen013a-MD421-V30-4x12</div><div>250 - Kalthallen013b-MD421-V30-4x12</div><div>251 - Kalthallen013c-MD421-V30-4x12</div><div>252 - Kalthallen013d-MD421-V30-4x12</div><div>253 - Kalthallen014a-MD421-V30-4x12</div><div>254 - Kalthallen014b-MD421-V30-4x12</div><div>255 - Kalthallen014c-MD421-V30-4x12</div><div>256 - Kalthallen014d-MD421-V30-4x12</div><div class="sel">257 - Kalthallen015a-MD421-V30-4x12</div><div>258 - Kalthallen015c-MD421-V30-4x12</div><div>259 - Kalthallen015d-MD421-V30-4x12</div><div>260 - Kalthallen016a-MD421-G12T75-4x12</div><div>261 - Kalthallen016b-MD421-G12T75-4x12</div><div>262 - Kalthallen016c-MD421-G12T75-4x12</div><div>263 - Kalthallen016d-MD421-G12T75-4x12</div><div>264 - Kalthallen017a-MD421-G12T75-4x12</div><div>265 - Kalthallen017b-MD421-G12T75-4x12</div><div>266 - Kalthallen017c-MD421-G12T75-4x12</div><div>267 - Kalthallen017d-MD421-G12T75-4x12</div><div>268 - Kalthallen018a-AT4050-V30-4x12</div><div>269 - Kalthallen018b-AT4050-V30-4x12</div><div>270 - Kalthallen018c-AT4050-V30-4x12</div><div>271 - Kalthallen018d-AT4050-V30-4x12</div></div><div class="col" style="left:759.5px;width:267px"><div>272 - Kalthallen019a-AT4050-V30-4x12</div><div>273 - Kalthallen019b-AT4050-V30-4x12</div><div>274 - Kalthallen019c-AT4050-V30-4x12</div><div>275 - Kalthallen019d-AT4050-V30-4x12</div><div>276 - Kalthallen020a-AT4050-V30-4x12</div><div>277 - Kalthallen020b-AT4050-V30-4x12</div><div>278 - Kalthallen020c-AT4050-V30-4x12</div><div>279 - Kalthallen020d-AT4050-V30-4x12</div><div>280 - Kalthallen021a-AT4050-G12T75-4x12</div><div>281 - Kalthallen021b-AT4050-G12T75-4x12</div><div>282 - Kalthallen021c-AT4050-G12T75-4x12</div><div>283 - Kalthallen021d-AT4050-G12T75-4x12</div><div>284 - Kalthallen022a-MD21-V30-4x12</div><div>285 - Kalthallen022b-MD21-V30-4x12</div><div>286 - Kalthallen022c-MD21-V30-4x12</div><div>287 - Kalthallen022d-MD21-V30-4x12</div><div>288 - Kalthallen023a-MD21-V30-4x12</div><div>289 - Kalthallen023b-MD21-V30-4x12</div><div>290 - Kalthallen023c-MD21-V30-4x12</div><div>291 - Kalthallen023d-MD21-V30-4x12</div><div>292 - Kalthallen024a-MD21-G12T75-4x12</div><div>293 - Kalthallen024b-MD21-G12T75-4x12</div><div>294 - Kalthallen024c-MD21-G12T75-4x12</div><div>295 - Kalthallen025a-i5-G12T75-4x12</div></div><div class="col" style="left:1026.5px;width:238px"><div>296 - Kalthallen025b-i5-G12T75-4x12</div><div>297 - Kalthallen025c-i5-G12T75-4x12</div><div>298 - Kalthallen025d-i5-G12T75-4x12</div><div>299 - Kalthallen026a-i5-G12T75-4x12</div><div>300 - Kalthallen026b-i5-G12T75-4x12</div><div>301 - Kalthallen026c-i5-G12T75-4x12</div><div>302 - Kalthallen026d-i5-G12T75-4x12</div><div>303 - Kalthallen027a-i5-V30-4x12</div><div>304 - Kalthallen027b-i5-V30-4x12</div><div>305 - Kalthallen027c-i5-V30-4x12</div><div>306 - Kalthallen027d-i5-V30-4x12</div><div>307 - Kalthallen028a-SM7-V30-4x12</div><div>308 - Kalthallen028b-SM7-V30-4x12</div><div>309 - Kalthallen028c-SM7-V30-4x12</div><div>310 - Kalthallen028d-SM7-V30-4x12</div><div>311 - Kalthallen029a-SM7-V30-4x12</div><div>312 - Kalthallen029b-SM7-V30-4x12</div><div>313 - Kalthallen029c-SM7-V30-4x12</div><div>314 - Kalthallen029d-SM7-V30-4x12</div><div>315 - Kalthallen030a-SM7-V30-4x12</div><div>316 - Kalthallen030b-SM7-V30-4x12</div><div>317 - Kalthallen030c-SM7-V30-4x12</div><div>318 - Kalthallen030d-SM7-V30-4x12</div><div>319 - Kalthallen031a-SM7-V30-4x12</div></div><div class="col" style="left:1264.5px;width:235.5px"><div>320 - Kalthallen031b-SM7-V30-4x12</div><div>321 - Kalthallen031c-SM7-V30-4x12</div><div>322 - Kalthallen031d-SM7-V30-4x12</div><div>323 - Kalthallen032a-SM7-G12T75-4x12</div><div>324 - Kalthallen032b-SM7-G12T75-4x12</div><div>325 - Kalthallen032c-SM7-G12T75-4x12</div><div>326 - Kalthallen032d-SM7-G12T75-4x12</div><div>327 - Kalthallen033a-SM7-G12T75-4x12</div><div>328 - Kalthallen033b-SM7-G12T75-4x12</div><div>329 - Kalthallen033c-SM7-G12T75-4x12</div><div>330 - Kalthallen033d-SM7-G12T75-4x12</div><div>331 - Kalthallen034a-SM58-V30-4x12</div><div>332 - Kalthallen034b-SM58-V30-4x12</div><div>333 - Kalthallen034c-SM58-V30-4x12</div><div>334 - Kalthallen034d-SM58-V30-4x12</div></div></div>
</body></html>
